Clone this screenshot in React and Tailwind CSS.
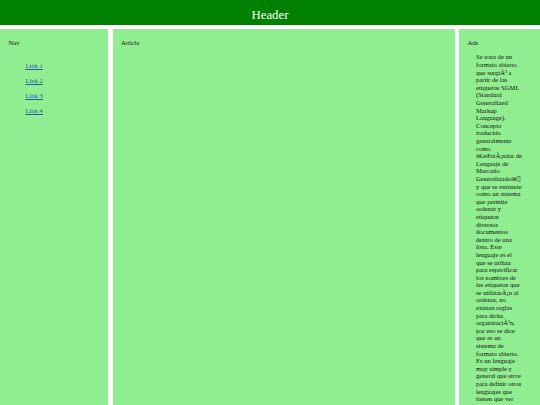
import React from 'react'

const links = ['Link 1', 'Link 2', 'Link 3', 'Link 4']

const adsText =
  'Se trata de un formato abierto que surgiÃ³ a partir de las etiquetas SGML (Standard Generalized Markup Language). Concepto traducido generalmente como â€œEstÃ¡ndar de Lenguaje de Marcado Generalizadoâ€\u25AF y que se entiende como un sistema que permite ordenar y etiquetar diversos documentos dentro de una lista. Este lenguaje es el que se utiliza para especificar los nombres de las etiquetas que se utilizarÃ¡n al ordenar, no existen reglas para dicha organizaciÃ³n, por eso se dice que es un sistema de formato abierto. Es un lenguaje muy simple y general que sirve para definir otros lenguajes que tienen que ver con la estructura de un documento.'

const App = () => {
  return (
    <div className="min-h-screen bg-white text-[#111] font-['Liberation_Serif',serif]">
      <header className="h-[25px] bg-[#008000] pt-[8px] text-center text-[12.8px] leading-[15px] text-white">
        Header
      </header>
      <div className="mt-[4px] grid grid-cols-[108px_342px_81px] gap-x-[4.5px] text-[6.6px] leading-[7.6px]">
        <nav className="bg-[#90ee90] pl-[8.5px] pt-[9.5px]">
          <div>Nav</div>
          <ul className="mt-[16px] flex flex-col gap-[7.4px] pl-[17px]">
            {links.map((l) => (
              <li key={l}>
                <a href="#" className="text-[#2858b0] underline">{l}</a>
              </li>
            ))}
          </ul>
        </nav>
        <article className="bg-[#90ee90] pl-[8.5px] pt-[9.5px]">
          <div>Article</div>
        </article>
        <aside className="bg-[#90ee90] pl-[8.5px] pt-[9.5px]">
          <div>Ads</div>
          <p className="ml-[8.5px] mt-[7.4px] w-[46px]">{adsText}</p>
        </aside>
      </div>
    </div>
  )
}

export default App
